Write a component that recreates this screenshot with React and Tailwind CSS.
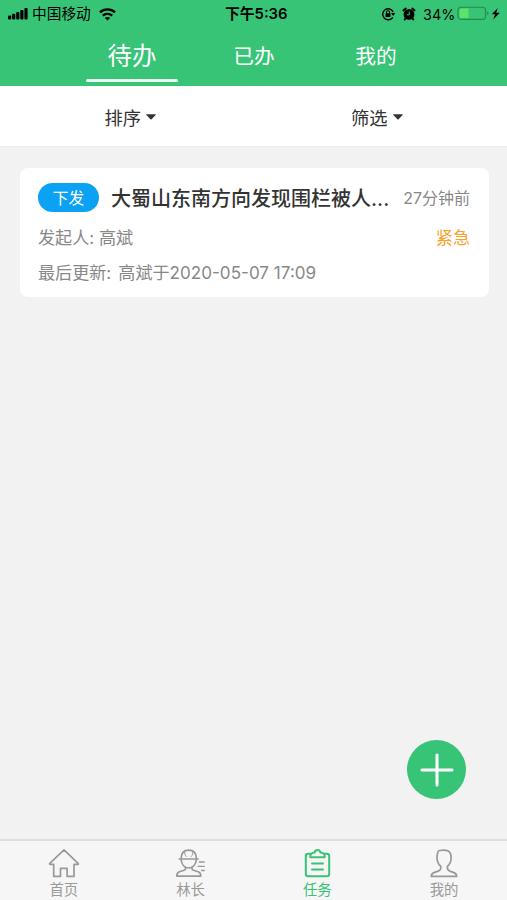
import { useState } from 'react';

const topTabs = ['待办', '已办', '我的'];

const tasks = [
  {
    id: 1,
    status: '下发',
    title: '大蜀山东南方向发现围栏被人...',
    time: '27分钟前',
    creator: '高斌',
    level: '紧急',
    updated: '高斌于2020-05-07 17:09',
  },
];

function StatusBar() {
  return (
    <div className="flex h-7 items-center text-black">
      <svg className="ml-2 shrink-0" width="20" height="12" viewBox="0 0 20 12" fill="currentColor">
        <rect x="0" y="7.5" width="3.2" height="4" rx="1" />
        <rect x="4.1" y="5.8" width="3.2" height="5.7" rx="1" />
        <rect x="8.2" y="4" width="3.2" height="7.5" rx="1" />
        <rect x="12.3" y="2" width="3.2" height="9.5" rx="1" />
        <rect x="16.4" y="0" width="3.2" height="11.5" rx="1" />
      </svg>
      <span className="ml-1 w-[60px] whitespace-nowrap text-[14.7px]">中国移动</span>
      <svg className="ml-[7px] shrink-0" width="17" height="13" viewBox="0 0 17 13" fill="none" stroke="currentColor" strokeWidth="2.4">
        <path d="M1 4.4C5.2.4 11.8.4 16 4.4" />
        <path d="M3.8 7.7c2.7-2.5 6.7-2.5 9.4 0" />
        <path d="M8.5 12.6 5.9 10c1.5-1.3 3.7-1.3 5.2 0z" fill="currentColor" stroke="none" />
      </svg>
      <span className="ml-[109px] w-[63px] whitespace-nowrap text-[14.8px] font-semibold">下午5:36</span>
      <svg className="ml-[93px] shrink-0" width="15" height="14" viewBox="0 0 15 14" fill="none" stroke="currentColor">
        <path d="M11.8 10.3A5.5 5.5 0 1 1 12.2 5" strokeWidth="1.4" />
        <path d="M9.9 6.1h4.3l-2 3z" fill="currentColor" stroke="none" />
        <rect x="4.5" y="6.2" width="5" height="3.8" rx=".5" fill="currentColor" stroke="none" />
        <path d="M5.5 6.4V5.2a1.5 1.5 0 0 1 3 0v1.2" strokeWidth="1.1" />
      </svg>
      <svg className="ml-[6px] shrink-0" width="14" height="14" viewBox="0 0 14 14">
        <circle cx="7" cy="7.4" r="5.4" fill="currentColor" />
        <path d="M1.4 3.5 3.7 1.5M12.6 3.5 10.3 1.5M3.6 11.3l-.9 1.2M10.4 11.3l.9 1.2" stroke="currentColor" strokeWidth="1.9" strokeLinecap="round" />
        <path d="M7.3 4.6v3.2H4.8" fill="none" stroke="#37c476" strokeWidth="1" />
      </svg>
      <span className="ml-[7px] w-[33px] whitespace-nowrap pt-px text-[14.4px]">34%</span>
      <svg className="ml-[1px] shrink-0" width="45" height="16" viewBox="0 0 45 16">
        <rect x="1" y="1.2" width="27.5" height="12.2" rx="3.2" fill="none" stroke="#228b50" strokeWidth="1.1" />
        <path d="M30.2 5.2c1.8.8 1.8 3.5 0 4.3z" fill="#228b50" />
        <path d="M4.5 2.5h7v9.6h-7a2 2 0 0 1-2-2V4.5a2 2 0 0 1 2-2z" fill="#5be36a" />
        <path d="m40.8 2-6 6.2h3.3l-1.9 5.2 6.6-6.6h-3.6z" fill="currentColor" />
      </svg>
    </div>
  );
}

function FilterItem({ label }) {
  return (
    <button type="button" className="flex flex-1 items-center justify-center pt-[2px] text-[18.3px] leading-none text-[#333]">
      <span className="pt-[2px]">{label}</span>
      <svg className="ml-[5px]" width="10" height="6" viewBox="0 0 10 6" fill="currentColor">
        <path d="M.8.2h8.4c.6 0 .8.5.4.9L5.6 5.2c-.4.4-.8.4-1.2 0L.4 1.1C0 .7.2.2.8.2z" />
      </svg>
    </button>
  );
}

function TaskCard({ task }) {
  return (
    <div className="h-[129px] rounded-lg bg-white pr-[19px] pl-[18px] pt-[15px]">
      <div className="flex h-[29px] items-center">
        <span className="flex h-[29px] w-[61px] shrink-0 items-center justify-center rounded-full bg-[#0ba2f3] pt-[2px] text-[15.7px] text-white">
          {task.status}
        </span>
        <span className="ml-3 pt-[3px] whitespace-nowrap text-[20px] leading-[29px] font-[450] text-[#333]">
          {task.title}
        </span>
        <span className="ml-auto whitespace-nowrap text-[16px] text-[#888]">{task.time}</span>
      </div>
      <div className="mt-[14px] flex h-6 items-center justify-between text-[17.1px] text-[#888]">
        <span>发起人: {task.creator}</span>
        <span className="text-[#f9a12b]">{task.level}</span>
      </div>
      <div className="mt-[11px] flex h-6 items-center text-[17.1px] text-[#888]">
        <span>最后更新:</span>
        <span className="ml-[7px]">{task.updated}</span>
      </div>
    </div>
  );
}

function HomeIcon() {
  return (
    <svg className="ml-[2px]" width="32" height="32" viewBox="0 0 32 32" fill="none" stroke="currentColor" strokeWidth="1.7" strokeLinejoin="round">
      <path d="M16 2.8 1.8 16.3c-.4.6-.1 1.1.5 1.1h3.4v12h6.8v-8h6.6v8h6.9v-12h3.7c.6 0 .8-.5.4-1z" />
    </svg>
  );
}

function RangerIcon() {
  return (
    <svg width="32" height="32" viewBox="0 0 32 32" fill="none" stroke="currentColor" strokeWidth="1.7" strokeLinecap="round" strokeLinejoin="round">
      <path d="M5.3 12h18.8" />
      <path d="M7 11.7C7.2 6.4 10 3.2 14.7 3.2s7.6 3.2 7.8 8.5" />
      <path d="M10.6 4.6c0 2.5.6 3.9 1.6 4.9M18.9 4.6c0 2.5-.6 3.9-1.6 4.9" strokeWidth="1" />
      <path d="M7.2 12.8c.4 4.9 3.5 8.2 7.5 8.2s7.2-3.3 7.6-8.2" />
      <path d="M11.5 20.4v1.4c0 .8-.5 1.2-1.5 1.5l-4.6 1.5c-1.9.7-2.6 2-2.6 4.3h24c0-2.3-.7-3.6-2.6-4.3l-4.7-1.5c-1-.3-1.5-.7-1.5-1.5v-1.4" />
      <path d="M25.3 15h5M24 19.3h6.3M27.5 23.5h2.8" strokeWidth="1.3" />
    </svg>
  );
}

function TaskIcon() {
  return (
    <svg width="32" height="32" viewBox="0 0 32 32" fill="none" stroke="currentColor" strokeWidth="2" strokeLinecap="round" strokeLinejoin="round">
      <path d="M9.6 6.8H7.2C5.6 6.8 4.8 7.6 4.8 9v18c0 1.4.8 2.3 2.4 2.3h18.6c1.5 0 2.4-.9 2.4-2.3V9c0-1.4-.9-2.2-2.4-2.2h-2.4" />
      <path d="M9.3 10.2c-.2-2.9 1.2-4.6 4.3-4.7.3-1.6 1.2-2.5 2.9-2.5s2.6.9 2.9 2.5c3.1.1 4.5 1.8 4.3 4.7z" />
      <path d="M11 16.4h11M11 22.6h11" />
    </svg>
  );
}

function MineIcon() {
  return (
    <svg width="32" height="32" viewBox="0 0 32 32" fill="none" stroke="currentColor" strokeWidth="1.7" strokeLinejoin="round">
      <path d="M12.8 19.4C10.4 17.3 9.2 14.7 9 11.8c-.1-2.4.1-4.4.8-6.6.3-1.2 1-1.8 2.4-1.7 2.8-.7 5.8-.6 8 .6 2.4 1.3 3.1 4 2.9 7.7-.1 2.9-1.3 5.5-3.7 7.6-.4 2.8 0 3.8 2.4 4.7l4.2 1.5c1.8.7 2.6 1.8 2.7 3.7H3.2c.1-1.9.9-3 2.7-3.7l4.3-1.5c2.5-.9 3-1.9 2.6-4.7z" />
    </svg>
  );
}

const navItems = [
  { label: '首页', Icon: HomeIcon },
  { label: '林长', Icon: RangerIcon },
  { label: '任务', Icon: TaskIcon },
  { label: '我的', Icon: MineIcon },
];

export default function App() {
  const [tab, setTab] = useState(0);
  const [nav, setNav] = useState(2);

  return (
    <div className="relative flex h-[900px] w-[507px] flex-col overflow-hidden bg-[#f2f2f2] font-['Inter','Noto_Sans_CJK_SC',sans-serif]">
      <header className="h-[86px] shrink-0 bg-[#37c476]">
        <StatusBar />
        <div className="ml-[71px] flex h-[54px] w-[366px]">
          {topTabs.map((label, i) => (
            <button
              key={label}
              type="button"
              onClick={() => setTab(i)}
              className={`flex flex-1 flex-col items-center text-white ${tab === i ? 'text-[24.5px]' : 'text-[20.7px]'}`}
            >
              <span className="flex h-[51px] items-center pt-[6px]">{label}</span>
              {tab === i && <span className="h-[3px] w-[92px] rounded-full bg-[#eefff4]" />}
            </button>
          ))}
        </div>
      </header>

      <div className="flex h-[61px] shrink-0 border-b border-[#ececec] bg-white px-[7px]">
        <FilterItem label="排序" />
        <FilterItem label="筛选" />
      </div>

      <main className="flex-1 pt-[21px] pr-[18px] pl-5">
        {tasks.map((task) => (
          <TaskCard key={task.id} task={task} />
        ))}
      </main>

      <button
        type="button"
        className="absolute top-[740px] left-[407px] flex size-[59px] items-center justify-center rounded-full bg-[#37c476] text-white"
      >
        <svg width="34" height="34" viewBox="0 0 34 34" stroke="currentColor" strokeWidth="3" strokeLinecap="round">
          <path d="M17 2v30M2 17h30" />
        </svg>
      </button>

      <nav className="flex h-[61px] shrink-0 border-t-2 border-[#dedede] bg-[#f6f6f6]">
        {navItems.map(({ label, Icon }, i) => (
          <button
            key={label}
            type="button"
            onClick={() => setNav(i)}
            className={`flex flex-1 flex-col items-center pt-[6px] text-[14.4px] leading-[20px] ${nav === i ? 'text-[#37c476]' : 'text-[#999]'}`}
          >
            <Icon />
            <span className="pt-px pl-px">{label}</span>
          </button>
        ))}
      </nav>
    </div>
  );
}
